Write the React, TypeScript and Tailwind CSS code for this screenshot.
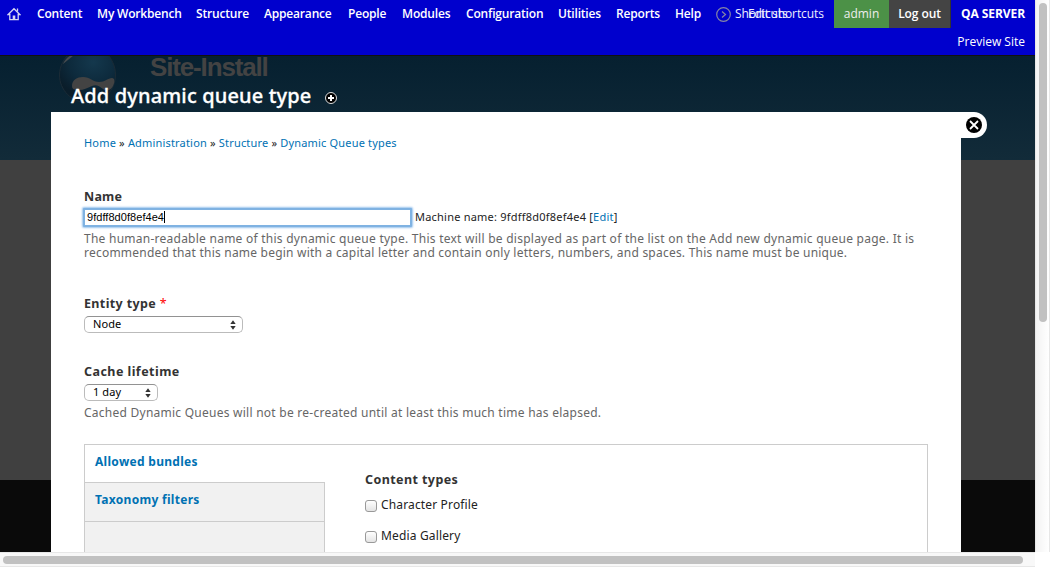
import React from "react";

const menu = [
  { label: "Content", cell: "w-[60px]" },
  { label: "My Workbench", cell: "w-[99px]" },
  { label: "Structure", cell: "w-[68px]" },
  { label: "Appearance", cell: "w-[84px]" },
  { label: "People", cell: "w-[54px]" },
  { label: "Modules", cell: "w-[64px]" },
  { label: "Configuration", cell: "w-[92px]" },
  { label: "Utilities", cell: "w-[58px]" },
  { label: "Reports", cell: "w-[59px]" },
  { label: "Help", cell: "w-[41px]" },
];

function HomeIcon() {
  return (
    <svg width="14" height="14" viewBox="0 0 14 14" fill="none" stroke="#d4d4f2" strokeWidth="1.3">
      <path d="M1.200 7.500 7 1.700l5.800 5.800h-1.600v5.200H2.800V7.500Z" />
      <path d="M10.500 1.500v3" />
      <path d="M5.700 8.500h2.600v4.200H5.700z" fill="#d4d4f2" stroke="none" />
    </svg>
  );
}

function Toolbar() {
  return (
    <header className="flex h-14 shrink-0 border-b border-[#111] bg-[#0000cd] font-['Open_Sans',sans-serif] text-[12px] font-semibold tracking-[-0.18px] whitespace-nowrap text-white">
      <div className="flex h-[28px] w-[37px] items-center pl-[7px]">
        <HomeIcon />
      </div>
      <nav className="flex h-[28px] items-center">
        {menu.map((item) => (
          <a key={item.label} className={item.cell}>
            {item.label}
          </a>
        ))}
      </nav>
      <div className="relative flex h-[28px] w-[118px] items-center">
        <svg width="15" height="15" viewBox="0 0 15 15" fill="none" stroke="#8585a5" strokeWidth="1.2">
          <circle cx="7.5" cy="7.5" r="6.8" />
          <path d="m6 4.5 3.5 3L6 10.5" />
        </svg>
        <span className="ml-1 font-medium tracking-[-0.08px] text-[#eeeeff]">Shortcuts</span>
        <span className="absolute left-[32px] font-medium tracking-[-0.08px] text-[#eeeeff]">Edit shortcuts</span>
      </div>
      <div className="flex h-[28px] w-[55px] items-center justify-center bg-[#4c9147] font-medium tracking-normal text-[#eee]">admin</div>
      <div className="flex h-[28px] w-[62px] items-center justify-center border-r border-[#333] bg-[#444] tracking-[-0.1px]">Log out</div>
      <div className="flex flex-1 flex-col items-end pr-[10px] leading-[28px]">
        <span className="font-bold tracking-[-0.07px]">QA SERVER</span>
        <span className="font-medium tracking-normal">Preview Site</span>
      </div>
    </header>
  );
}

function Backdrop() {
  return (
    <div className="absolute inset-0 flex flex-col">
      <div className="h-[160px] bg-linear-to-b from-[#062030] from-35% to-[#122b39] pt-[52px] pl-[58px]">
        <div className="flex">
          <svg width="60" height="58" viewBox="0 0 60 58">
            <defs>
              <radialGradient id="drop" cx="0.6" cy="0.2" r="0.7">
                <stop offset="0" stopColor="#14384d" />
                <stop offset="0.6" stopColor="#0d2a3c" />
                <stop offset="1" stopColor="#0a1d2a" />
              </radialGradient>
            </defs>
            <path d="M13 0C6 6 1.500 14 1.500 23c0 15 12 27.500 28 27.500S57.500 38 57.500 23c0-9-4-17-10-23Z" fill="url(#drop)" stroke="#1b2b36" strokeWidth="1" />
            <path d="M5 12C7 7 11 3 18 2c-5 3-8 6-13 10Z" fill="#444a4e" />
            <path d="M14 34c0-6 5-9 11-9 7 0 10 5 16 5 6 0 9-4 13-4 3 0 3 4 1 8-2 4-6 6-10 3-4-3-7-5-11-3-5 2-8 4-13 4-5 0-7-1-7-4Z" fill="#434343" />
          </svg>
          <span className="pl-[32px] font-['Liberation_Sans',sans-serif] text-[26px] leading-[31px] font-bold tracking-[-1.15px] text-[#434343]">Site-Install</span>
        </div>
      </div>
      <div className="h-[320px] bg-[#404040]" />
      <div className="flex-1 bg-[#0a0a0a]" />
    </div>
  );
}

function Select({ value, width }: { value: string; width: string }) {
  return (
    <div className={`flex h-[17px] items-center justify-between rounded-[5px] border border-[#bbb] border-t-[#929292] bg-white pr-[6px] pl-2 text-[11px] tracking-[0.1px] text-black ${width}`}>
      <span>{value}</span>
      <svg width="6" height="10" viewBox="0 0 6 10" fill="#333">
        <path d="M0.300 4 3 0.300l2.700 3.700ZM0.300 6h5.400L3 9.700Z" />
      </svg>
    </div>
  );
}

function CheckRow({ label }: { label: string }) {
  return (
    <label className="flex h-[31px] items-start text-[12px] leading-[18px] tracking-[0.15px] text-[#222]">
      <span className="mt-[4px] mr-1 h-3 w-3 rounded-[3px] border border-[#999] bg-linear-to-b from-white to-[#e4e4e4]" />
      {label}
    </label>
  );
}

function Panel() {
  return (
    <section className="h-[440px] w-[910px] shrink-0 bg-white px-[33px] text-[12px] tracking-[0.22px] text-[#333]">
      <div className="h-[77px] pt-[22px] text-[11px] leading-[18px] tracking-[0.18px] text-[#222]">
        <a className="text-[#0071b3]">Home</a> » <a className="text-[#0071b3]">Administration</a> » <a className="text-[#0071b3]">Structure</a> »{" "}
        <a className="text-[#0071b3]">Dynamic Queue types</a>
      </div>

      <div className="h-[106px]">
        <div className="h-[18px] text-[12.5px] leading-[16px] font-bold">Name</div>
        <div className="flex h-[20px] items-center text-[11px] text-[#222]">
          <div className="-ml-px flex h-[19px] w-[329px] items-center rounded-[1px] border-2 border-[#7fb2e2] bg-white pl-[2px] font-['Liberation_Sans',sans-serif] tracking-[0.05px] text-black shadow-[0_0_2px_1px_#9bc5ee]">
            9fdff8d0f8ef4e4
            <span className="h-3 w-px bg-black" />
          </div>
          <span className="ml-[3px]">
            Machine name: 9fdff8d0f8ef4e4 [<a className="text-[#0071b3]">Edit</a>]
          </span>
        </div>
        <p className="mt-[5px] text-[12px] leading-[14px] whitespace-nowrap text-[#666]">
          <span className="block tracking-[0.25px]">
            The human-readable name of this dynamic queue type. This text will be displayed as part of the list on the Add new dynamic queue page. It is
          </span>
          <span className="block">
            recommended that this name begin with a capital letter and contain only letters, numbers, and spaces. This name must be unique.
          </span>
        </p>
      </div>

      <div className="h-[68px]">
        <div className="h-[21px] text-[12.500px] leading-[18px] font-bold tracking-[0.37px]">
          Entity type <span className="font-normal text-[#f00]">*</span>
        </div>
        <Select value="Node" width="w-[159px]" />
      </div>

      <div className="h-[81px]">
        <div className="h-[21px] text-[12.500px] leading-[18px] font-bold tracking-[0.45px]">Cache lifetime</div>
        <Select value="1 day" width="w-[74px]" />
        <p className="mt-[5px] leading-[14px] tracking-[0.25px] text-[#666]">Cached Dynamic Queues will not be re-created until at least this much time has elapsed.</p>
      </div>

      <div className="flex h-[108px] w-[844px] border border-b-0 border-[#ccc]">
        <div className="flex w-[240px] flex-col text-[12px] font-bold tracking-[0.3px] text-[#0071b3]">
          <div className="h-[37px] pl-[10px] leading-[34px]">Allowed bundles</div>
          <div className="h-[40px] border-y border-r border-[#ccc] bg-[#f1f1f1] pl-[10px] leading-[34px]">Taxonomy filters</div>
          <div className="flex-1 border-r border-[#ccc] bg-[#f1f1f1]" />
        </div>
        <div className="pt-[26px] pl-[40px]">
          <div className="h-[25px] text-[12.500px] leading-[18px] font-bold tracking-[0.42px]">Content types</div>
          <CheckRow label="Character Profile" />
          <CheckRow label="Media Gallery" />
        </div>
      </div>
    </section>
  );
}

export default function App() {
  return (
    <div className="flex h-[567px] w-[1050px] flex-col overflow-hidden bg-white font-['Noto_Sans',sans-serif]">
      <div className="flex h-[552px] shrink-0 overflow-hidden">
        <main className="relative h-[552px] w-[1035px] shrink-0 overflow-hidden">
          <Backdrop />
          <div className="relative flex h-full flex-col">
            <Toolbar />
            <div className="flex h-14 shrink-0 items-center pt-[25px] pl-[71px]">
              <h1 className="-mt-[2px] w-[253px] text-[20px] leading-[28px] font-medium tracking-[0.15px] whitespace-nowrap text-white [-webkit-text-stroke:0.3px_white]">
                Add dynamic queue type
              </h1>
              <svg className="mt-[2px]" width="14" height="14" viewBox="0 0 14 14">
                <circle cx="7" cy="7" r="5.5" fill="#000" stroke="#ddd" />
                <path d="M7 4v6M4 7h6" stroke="#fff" strokeWidth="2" />
              </svg>
            </div>
            <div className="flex items-start pl-[51px]">
              <Panel />
              <button className="flex h-[26px] w-[26px] items-center rounded-r-full bg-white pl-[5px]">
                <svg width="16" height="16" viewBox="0 0 16 16">
                  <circle cx="8" cy="8" r="8" fill="#000" />
                  <path d="m4 4 8 8M12 4l-8 8" stroke="#fff" strokeWidth="1.8" />
                </svg>
              </button>
            </div>
          </div>
        </main>
        <div className="w-[15px] border-x border-[#e7e7e7] bg-linear-to-r from-[#f3f3f3] to-white pt-[3px] pl-[3px]">
          <div className="h-[319px] w-[8px] rounded-full bg-[#c1c1c1]" />
        </div>
      </div>
      <div className="h-[15px] w-[1035px] border-y border-[#e7e7e7] bg-[#f8f8f8] pt-[3px] pl-[3px]">
        <div className="h-[8px] w-[1020px] rounded-full bg-[#c1c1c1]" />
      </div>
    </div>
  );
}
